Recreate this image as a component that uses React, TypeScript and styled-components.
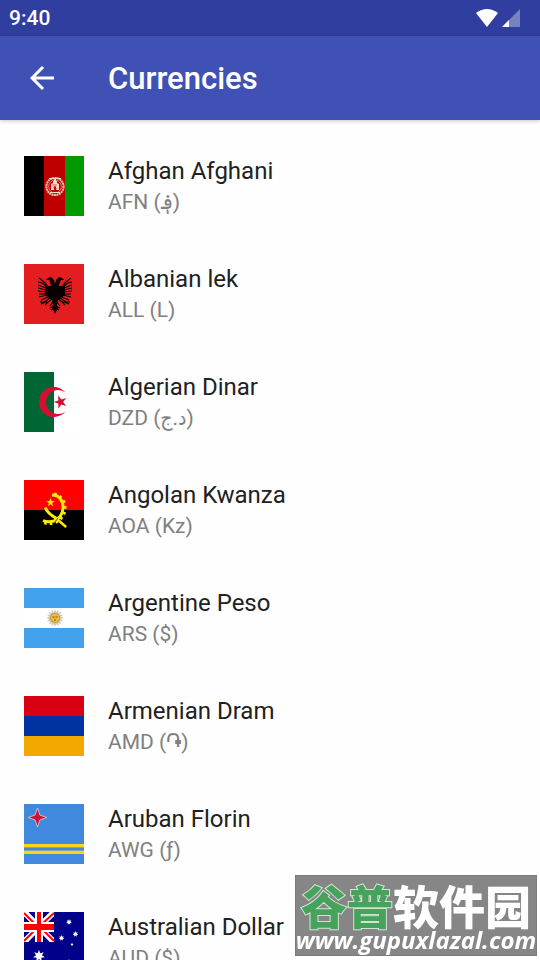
import React from "react";
import styled, { createGlobalStyle } from "styled-components";

const GlobalStyle = createGlobalStyle`
  * { box-sizing: border-box; }
  body { margin: 0; background: #fefefe; font-family: Roboto, "DejaVu Sans Condensed", "DejaVu Sans", sans-serif; }
`;

const Screen = styled.div`
  display: flex;
  flex-direction: column;
  height: 100vh;
  overflow: hidden;
`;

const StatusBar = styled.div`
  display: flex;
  align-items: center;
  justify-content: space-between;
  flex: none;
  height: 36px;
  padding: 0 20px 0 9px;
  background: #303f9f;
  color: #fff;
  font-size: 21px;
  font-weight: 500;
`;

const StatusIcons = styled.div`
  display: flex;
  gap: 4px;
`;

const AppBar = styled.header`
  display: flex;
  align-items: center;
  flex: none;
  gap: 36px;
  height: 84px;
  padding: 0 12px;
  background: #3f51b5;
  color: #fff;
  box-shadow: 0 1px 4px rgba(0, 0, 0, 0.22);
  z-index: 1;
`;

const BackButton = styled.button`
  display: flex;
  align-items: center;
  justify-content: center;
  width: 60px;
  height: 60px;
  padding: 0;
  border: 0;
  background: none;
  color: inherit;
`;

const Title = styled.h1`
  margin: 0;
  font-size: 31px;
  font-weight: 500;
`;

const List = styled.ul`
  flex: 1;
  min-height: 0;
  margin: 0;
  padding: 12px 0;
  list-style: none;
  overflow-y: auto;
  scrollbar-width: none;
`;

const Row = styled.li`
  display: flex;
  align-items: center;
  gap: 24px;
  height: 108px;
  padding: 0 24px;
`;

const FlagBox = styled.svg`
  flex: none;
  width: 60px;
  height: 60px;
`;

const Name = styled.div`
  font-size: 24px;
  line-height: 32px;
  color: #212121;
`;

const Code = styled.div`
  font-size: 21px;
  line-height: 30px;
  color: #808080;
`;

const Watermark = styled.div`
  position: fixed;
  right: 3px;
  bottom: 4px;
  display: flex;
  flex-direction: column;
  align-items: center;
  width: 242px;
  height: 81px;
  background: #868686;
  border: 1px solid #7a7a7a;
  color: #fff;
  white-space: nowrap;
  z-index: 2;
`;

const SiteName = styled.div`
  font-family: "Noto Sans CJK SC", sans-serif;
  font-size: 46px;
  font-weight: 900;
  line-height: 56px;
  height: 52px;
`;

const Green = styled.span`
  color: #46a35c;
  -webkit-text-stroke: 2px #d3e2d6;
  paint-order: stroke fill;
`;

const SiteUrl = styled.div`
  font-family: "Open Sans", sans-serif;
  font-size: 24px;
  font-weight: 700;
  font-style: italic;
  line-height: 24px;
`;

function starPoints(cx: number, cy: number, r: number, inner: number, tips: number, start = -90) {
  return Array.from({ length: tips * 2 }, (_, i) => {
    const a = ((start + (i * 180) / tips) * Math.PI) / 180;
    const d = i % 2 ? inner : r;
    return `${(cx + d * Math.cos(a)).toFixed(2)},${(cy + d * Math.sin(a)).toFixed(2)}`;
  }).join(" ");
}

const Afghanistan = () => (
  <>
    <path fill="#000" d="M0 0h21v60H0z" />
    <path fill="#bf0000" d="M20 0h21v60H20z" />
    <path fill="#009900" d="M41 0h19v60H41z" />
    <g fill="none" stroke="#eebfb2">
      <circle cx="31" cy="30.500" r="8.6" strokeWidth="2" strokeDasharray="2 .5" />
      <circle cx="31" cy="30.500" r="6.4" strokeWidth=".7" />
    </g>
    <path fill="#f6d8cf" d="M27 34v-6l2-1v-2h1v-2h2v2h1v2l2 1v6h-3v-3q-1-2-2 0v3zM26 36h10v1H26zM25 22h12v1H25z" />
    <path stroke="#c7291f" strokeWidth=".7" d="M28 29h5M29 31l4 2" />
  </>
);

const EagleHalf = () => (
  <g>
    <path d="M31 20l-1-4-3-3-3 1-2 2 3 0 1 2 1 3-1 3 5 4z" />
    <path d="M21 20l3 2 4 0 3 2v12l-5-1-5-4z" />
    <g fill="none" stroke="#080000" strokeWidth="1.1">
      <path d="M23 21l-3-3-5-4M22 22l-4-3-4-1M22 24l-8-3M22 26l-8-2M22 28l-8-1M22 30l-7 0M23 31l-8 2M24 33l-7 3M26 34l-6 4" />
      <path d="M28 35l-4 3-8 0M22 38l-5 2M24 38l-3 3M29 38l-3 4M30 42l-4 2M30 44l-3 2" />
    </g>
  </g>
);

const Albania = () => (
  <>
    <path fill="#e41e20" d="M0 0h60v60H0z" />
    <g fill="#080000">
      <EagleHalf />
      <g transform="matrix(-1 0 0 1 62 0)">
        <EagleHalf />
      </g>
      <path d="M27 32h8l-2 9 1 3-3 6-3-6 1-3z" />
    </g>
  </>
);

const Algeria = () => (
  <>
    <path fill="#fff" d="M0 0h60v60H0z" />
    <path fill="#006633" d="M0 0h30v60H0z" />
    <path fill="#d21034" d="M42.500 20.500A15 15 0 1 0 42.500 39.500A12 12 0 1 1 42.500 20.500z" transform="translate(-1 0)" />
    <polygon fill="#d21034" points={starPoints(36.5, 30, 7, 2.7, 5, 180)} />
  </>
);

const Angola = () => (
  <>
    <path fill="#f00" d="M0 0h60v30H0z" />
    <path fill="#000" d="M0 30h60v30H0z" />
    <g fill="none" stroke="#ffec00">
      <path strokeWidth="3" d="M28 15C35 15 39.500 21 39 28C38.500 35 35 39 30 41C26 42 22 42 19 40.500" />
      <path
        strokeWidth="3"
        strokeDasharray="2.6 3.2"
        d="M30 14C37 15 41.500 22 41 29C40.500 36 36 41 30 43C25 44 22 43.500 19 42.500"
      />
      <path strokeWidth="3" d="M21.500 27.500C22 32 29 36.500 34 39.500" />
      <path strokeWidth="2.4" strokeLinecap="round" d="M33 39l8.500 7.500" />
    </g>
    <path stroke="#000" strokeWidth=".7" d="M34 38l-3 4" />
    <polygon fill="#ffec00" points={starPoints(26.500, 22.500, 4.5, 1.8, 5)} />
  </>
);

const Argentina = () => (
  <>
    <path fill="#42a2ed" d="M0 0h60v60H0z" />
    <path fill="#fff" d="M0 20h60v20H0z" />
    <polygon fill="#d3cab2" points={starPoints(31, 30, 8.8, 6, 16)} />
    <circle cx="31" cy="30" r="5" fill="#b99a4c" />
    <circle cx="31" cy="30" r="4" fill="#f0bd33" />
    <path stroke="#765116" strokeWidth="1" d="M28.500 29h2M31.500 29h2M30 32h2" />
  </>
);

const Armenia = () => (
  <>
    <path fill="#d90012" d="M0 0h60v20H0z" />
    <path fill="#0033a0" d="M0 20h60v20H0z" />
    <path fill="#f2a800" d="M0 40h60v20H0z" />
  </>
);

const Aruba = () => (
  <>
    <path fill="#4189dd" d="M0 0h60v60H0z" />
    <path fill="#f9d616" d="M0 40h60v3H0zM0 47h60v3H0z" />
    <path fill="#86a5a0" d="M0 43h60v1H0zM0 46h60v1H0z" />
    <polygon fill="#d21034" stroke="#e3cddb" strokeWidth=".8" points={starPoints(13.5, 13.5, 9.5, 3.4, 4)} />
  </>
);

const Australia = () => (
  <>
    <path fill="#00008b" d="M0 0h60v60H0z" />
    <path stroke="#fff" strokeWidth="6" d="M2 2l26 26M28 2L2 28" />
    <path fill="#fff" d="M0 0h5l-5 5zM30 0v5l-5-5zM0 30v-5l5 5zM30 30h-5l5-5z" />
    <path stroke="#f00" strokeWidth="2" d="M0 1l12 12M30 1L18 12M0 29l12-12M18 17l12 12" />
    <path stroke="#fff" strokeWidth="10" d="M0 15h30" />
    <path stroke="#fff" strokeWidth="8" d="M15 0v30" />
    <path stroke="#f00" strokeWidth="6" d="M0 15h30" />
    <path stroke="#f00" strokeWidth="4" d="M15 0v30" />
    <g fill="#fff">
      <polygon points={starPoints(15, 44, 6, 3, 7)} />
      <polygon points={starPoints(45, 10, 3, 1.5, 7)} />
      <polygon points={starPoints(51.5, 22, 3, 1.5, 7)} />
      <polygon points={starPoints(37.5, 26, 3, 1.5, 7)} />
      <polygon points={starPoints(48, 32.5, 1.6, 0.8, 5)} />
      <polygon points={starPoints(45, 50, 3, 1.5, 7)} />
    </g>
  </>
);

const currencies = [
  { name: "Afghan Afghani", code: "AFN", symbol: "؋", Flag: Afghanistan },
  { name: "Albanian lek", code: "ALL", symbol: "L", Flag: Albania },
  { name: "Algerian Dinar", code: "DZD", symbol: "د.ج", Flag: Algeria },
  { name: "Angolan Kwanza", code: "AOA", symbol: "Kz", Flag: Angola },
  { name: "Argentine Peso", code: "ARS", symbol: "$", Flag: Argentina },
  { name: "Armenian Dram", code: "AMD", symbol: "֏", Flag: Armenia },
  { name: "Aruban Florin", code: "AWG", symbol: "ƒ", Flag: Aruba },
  { name: "Australian Dollar", code: "AUD", symbol: "$", Flag: Australia },
];

export default function App() {
  return (
    <Screen>
      <GlobalStyle />
      <StatusBar>
        <span>9:40</span>
        <StatusIcons>
          <svg width="22" height="18" viewBox="0 0 22 18" aria-hidden="true">
            <path fill="#fff" d="M0 4Q11-4 22 4L11 18z" />
          </svg>
          <svg width="18" height="18" viewBox="0 0 18 18" aria-hidden="true">
            <path fill="#fff" fillOpacity=".35" d="M18 0v18H0z" />
            <path fill="#fff" d="M7 11v7H0z" />
          </svg>
        </StatusIcons>
      </StatusBar>
      <AppBar>
        <BackButton type="button" aria-label="Back">
          <svg width="36" height="36" viewBox="0 0 24 24" aria-hidden="true">
            <path
              fill="none"
              stroke="currentColor"
              strokeWidth="2"
              d="M20 12H5.500M12.700 4.700L5.400 12l7.300 7.300"
            />
          </svg>
        </BackButton>
        <Title>Currencies</Title>
      </AppBar>
      <List>
        {currencies.map(({ name, code, symbol, Flag }) => (
          <Row key={code}>
            <FlagBox viewBox="0 0 60 60" aria-hidden="true">
              <Flag />
            </FlagBox>
            <div>
              <Name>{name}</Name>
              <Code>
                {code} ({symbol})
              </Code>
            </div>
          </Row>
        ))}
      </List>
      <Watermark>
        <SiteName>
          <Green>谷普</Green>软件园
        </SiteName>
        <SiteUrl>www.gupuxlazal.com</SiteUrl>
      </Watermark>
    </Screen>
  );
}
